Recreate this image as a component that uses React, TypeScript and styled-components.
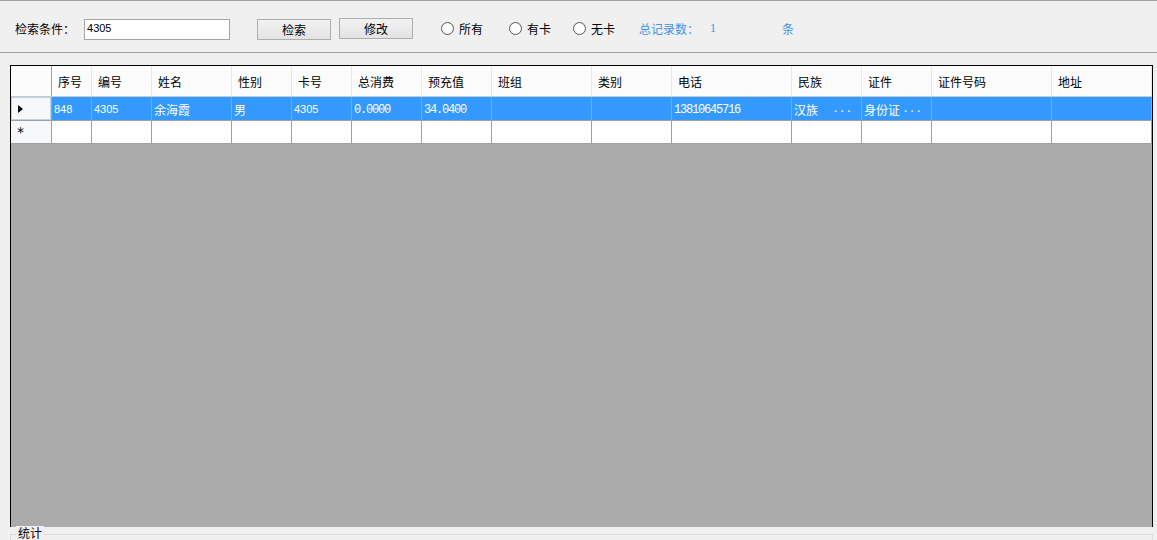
import React from "react";
import styled, { createGlobalStyle } from "styled-components";

const Global = createGlobalStyle`
  html, body { margin: 0; padding: 0; height: 540px; overflow: hidden; background: #f0f0f0; }
  body { font-family: "Noto Sans CJK SC", "Liberation Sans", sans-serif; font-size: 12px; color: #000; }
`;

const Page = styled.div`
  display: flex;
  flex-direction: column;
  width: 1157px;
  height: 540px;
`;

const Toolbar = styled.div`
  height: 53px;
  flex-shrink: 0;
  border-top: 1px solid #a0a0a0;
  border-bottom: 1px solid #a0a0a0;
  display: flex;
  align-items: center;
  padding-top: 4px;
  box-sizing: border-box;
`;

const Label = styled.span<{ $ml: number }>`
  margin-left: ${(p) => p.$ml}px;
  font-size: 12px;
  line-height: 14px;
  white-space: nowrap;
`;

const Input = styled.div<{ $ml: number }>`
  margin-left: ${(p) => p.$ml}px;
  width: 146px;
  height: 21px;
  box-sizing: border-box;
  border: 1px solid #a5a5a5;
  background: #fff;
  font-family: "Liberation Sans", sans-serif;
  font-size: 11px;
  padding: 2px 0 0 2px;
  margin-top: 2px;
`;

const Button = styled.div<{ $ml: number; $dy: number }>`
  margin-left: ${(p) => p.$ml}px;
  width: 74px;
  height: 21px;
  box-sizing: border-box;
  border: 1px solid #adadad;
  background: linear-gradient(#f2f2f2, #e3e3e3);
  display: flex;
  align-items: center;
  justify-content: center;
  font-size: 12px;
  position: relative;
  top: ${(p) => p.$dy}px;
`;

const Radio = styled.label<{ $ml: number }>`
  margin-left: ${(p) => p.$ml}px;
  display: flex;
  align-items: center;
  gap: 5px;
  font-size: 12px;
  white-space: nowrap;
`;

const RadioCircle = styled.span`
  width: 13px;
  height: 13px;
  box-sizing: border-box;
  border-radius: 50%;
  border: 1px solid #5a5a5a;
  background: radial-gradient(circle at 50% 50%, #ffffff 45%, #e8e8e8 100%);
  display: inline-block;
`;

const BlueText = styled.span<{ $ml: number; $mono?: boolean }>`
  margin-left: ${(p) => p.$ml}px;
  color: #3d95ea;
  font-size: 12px;
  font-family: ${(p) => (p.$mono ? '"Liberation Serif", serif' : '"Noto Sans CJK SC", sans-serif')};
  white-space: nowrap;
`;

const Grid = styled.div`
  margin: 12px 0 0 10px;
  width: 1143px;
  height: 462px;
  box-sizing: border-box;
  border: 1px solid #000;
  border-bottom: none;
  background: #ababab;
  display: flex;
  flex-direction: column;
  flex-shrink: 0;
`;

const HeaderRow = styled.div`
  display: flex;
  height: 31px;
  background: #fcfcfc;
  border-bottom: 1px solid #c6ccd4;
  box-sizing: border-box;
`;

const HeadCell = styled.div<{ $w: number; $corner?: boolean }>`
  width: ${(p) => p.$w}px;
  flex-shrink: 0;
  box-sizing: border-box;
  border-right: 1px solid ${(p) => (p.$corner ? "#a0a0a0" : "#e3eaf3")};
  padding-left: 6px;
  display: flex;
  align-items: center;
  font-size: 12px;
  white-space: nowrap;
  overflow: hidden;
`;

const Row = styled.div<{ $h: number; $sel?: boolean }>`
  display: flex;
  height: ${(p) => p.$h}px;
  box-sizing: border-box;
  border-bottom: 1px solid #a0a0a0;
  background: ${(p) => (p.$sel ? "#3399ff" : "#fff")};
  color: ${(p) => (p.$sel ? "#fff" : "#000")};
`;

const RowHead = styled.div<{ $focus?: boolean }>`
  width: 41px;
  flex-shrink: 0;
  box-sizing: border-box;
  background: #f7f8fa;
  border-right: 1px solid #a0a0a0;
  ${(p) => (p.$focus ? "box-shadow: inset 0 0 0 1px #c3d0e0;" : "")}
  color: #000;
  display: flex;
  align-items: center;
  padding-left: 6px;
`;

const Cell = styled.div<{ $w: number; $font: "sans" | "mono" | "cjk" }>`
  width: ${(p) => p.$w}px;
  flex-shrink: 0;
  box-sizing: border-box;
  border-right: 1px solid #a0a0a0;
  padding-left: 2px;
  padding-top: ${(p) => (p.$font === "mono" ? "3px" : "1px")};
  display: flex;
  align-items: center;
  white-space: nowrap;
  overflow: hidden;
  font-family: ${(p) =>
    p.$font === "mono"
      ? '"Liberation Mono", monospace'
      : p.$font === "sans"
      ? '"Liberation Sans", sans-serif'
      : '"Noto Sans CJK SC", sans-serif'};
  font-size: ${(p) => (p.$font === "mono" ? "12px" : p.$font === "sans" ? "11px" : "12px")};
  letter-spacing: ${(p) => (p.$font === "mono" ? "-1.2px" : "0")};
`;

const Dots = styled.span`
  margin-left: auto;
  margin-right: 9px;
  font-family: "Liberation Mono", monospace;
  font-size: 11px;
  letter-spacing: 0px;
`;

const GroupBox = styled.div`
  margin: 0 0 0 10px;
  width: 1143px;
  height: 40px;
  box-sizing: border-box;
  position: relative;
  flex-shrink: 0;
`;

const GroupLine = styled.div`
  margin-top: 7px;
  height: 30px;
  border: 1px solid #dcdcdc;
  box-sizing: border-box;
`;

const Legend = styled.span`
  position: absolute;
  left: 6px;
  top: -1px;
  padding: 0 2px;
  background: #f0f0f0;
  font-size: 12px;
  line-height: 14px;
`;

const Triangle = styled.span`
  width: 0;
  height: 0;
  border-top: 4px solid transparent;
  border-bottom: 4px solid transparent;
  border-left: 5px solid #000;
  margin-left: 1px;
`;

const Star = styled.span`
  font-family: "DejaVu Sans", sans-serif;
  font-size: 14px;
  line-height: 14px;
`;

type Col = { key: string; title: string; w: number; font: "sans" | "mono" | "cjk" };

const columns: Col[] = [
  { key: "seq", title: "序号", w: 40, font: "sans" },
  { key: "no", title: "编号", w: 60, font: "sans" },
  { key: "name", title: "姓名", w: 80, font: "cjk" },
  { key: "sex", title: "性别", w: 60, font: "cjk" },
  { key: "card", title: "卡号", w: 60, font: "sans" },
  { key: "total", title: "总消费", w: 70, font: "mono" },
  { key: "pre", title: "预充值", w: 70, font: "mono" },
  { key: "team", title: "班组", w: 100, font: "cjk" },
  { key: "type", title: "类别", w: 80, font: "cjk" },
  { key: "tel", title: "电话", w: 120, font: "mono" },
  { key: "nation", title: "民族", w: 70, font: "cjk" },
  { key: "idtype", title: "证件", w: 70, font: "cjk" },
  { key: "idno", title: "证件号码", w: 120, font: "mono" },
  { key: "addr", title: "地址", w: 100, font: "cjk" },
];

const record: Record<string, string> = {
  seq: "848",
  no: "4305",
  name: "余海霞",
  sex: "男",
  card: "4305",
  total: "0.0000",
  pre: "34.0400",
  team: "",
  type: "",
  tel: "13810645716",
  nation: "汉族",
  idtype: "身份证",
  idno: "",
  addr: "",
};

const withDots = new Set(["nation", "idtype"]);

export default function App() {
  return (
    <Page>
      <Global />
      <Toolbar>
        <Label $ml={15}>检索条件：</Label>
        <Input $ml={9}>4305</Input>
        <Button $ml={27} $dy={1}>检索</Button>
        <Button $ml={8} $dy={0}>修改</Button>
        <Radio $ml={28}>
          <RadioCircle />
          所有
        </Radio>
        <Radio $ml={26}>
          <RadioCircle />
          有卡
        </Radio>
        <Radio $ml={22}>
          <RadioCircle />
          无卡
        </Radio>
        <BlueText $ml={24}>总记录数：</BlueText>
        <BlueText $ml={11} $mono>1</BlueText>
        <BlueText $ml={66}>条</BlueText>
      </Toolbar>
      <Grid>
        <HeaderRow>
          <HeadCell $w={41} $corner />
          {columns.map((c) => (
            <HeadCell key={c.key} $w={c.w}>
              {c.title}
            </HeadCell>
          ))}
        </HeaderRow>
        <Row $h={24} $sel>
          <RowHead $focus>
            <Triangle />
          </RowHead>
          {columns.map((c) => (
            <Cell key={c.key} $w={c.w} $font={c.font}>
              {record[c.key]}
              {withDots.has(c.key) && <Dots>...</Dots>}
            </Cell>
          ))}
        </Row>
        <Row $h={23}>
          <RowHead>
            <Star>*</Star>
          </RowHead>
          {columns.map((c) => (
            <Cell key={c.key} $w={c.w} $font={c.font} />
          ))}
        </Row>
      </Grid>
      <GroupBox>
        <GroupLine />
        <Legend>统计</Legend>
      </GroupBox>
    </Page>
  );
}
